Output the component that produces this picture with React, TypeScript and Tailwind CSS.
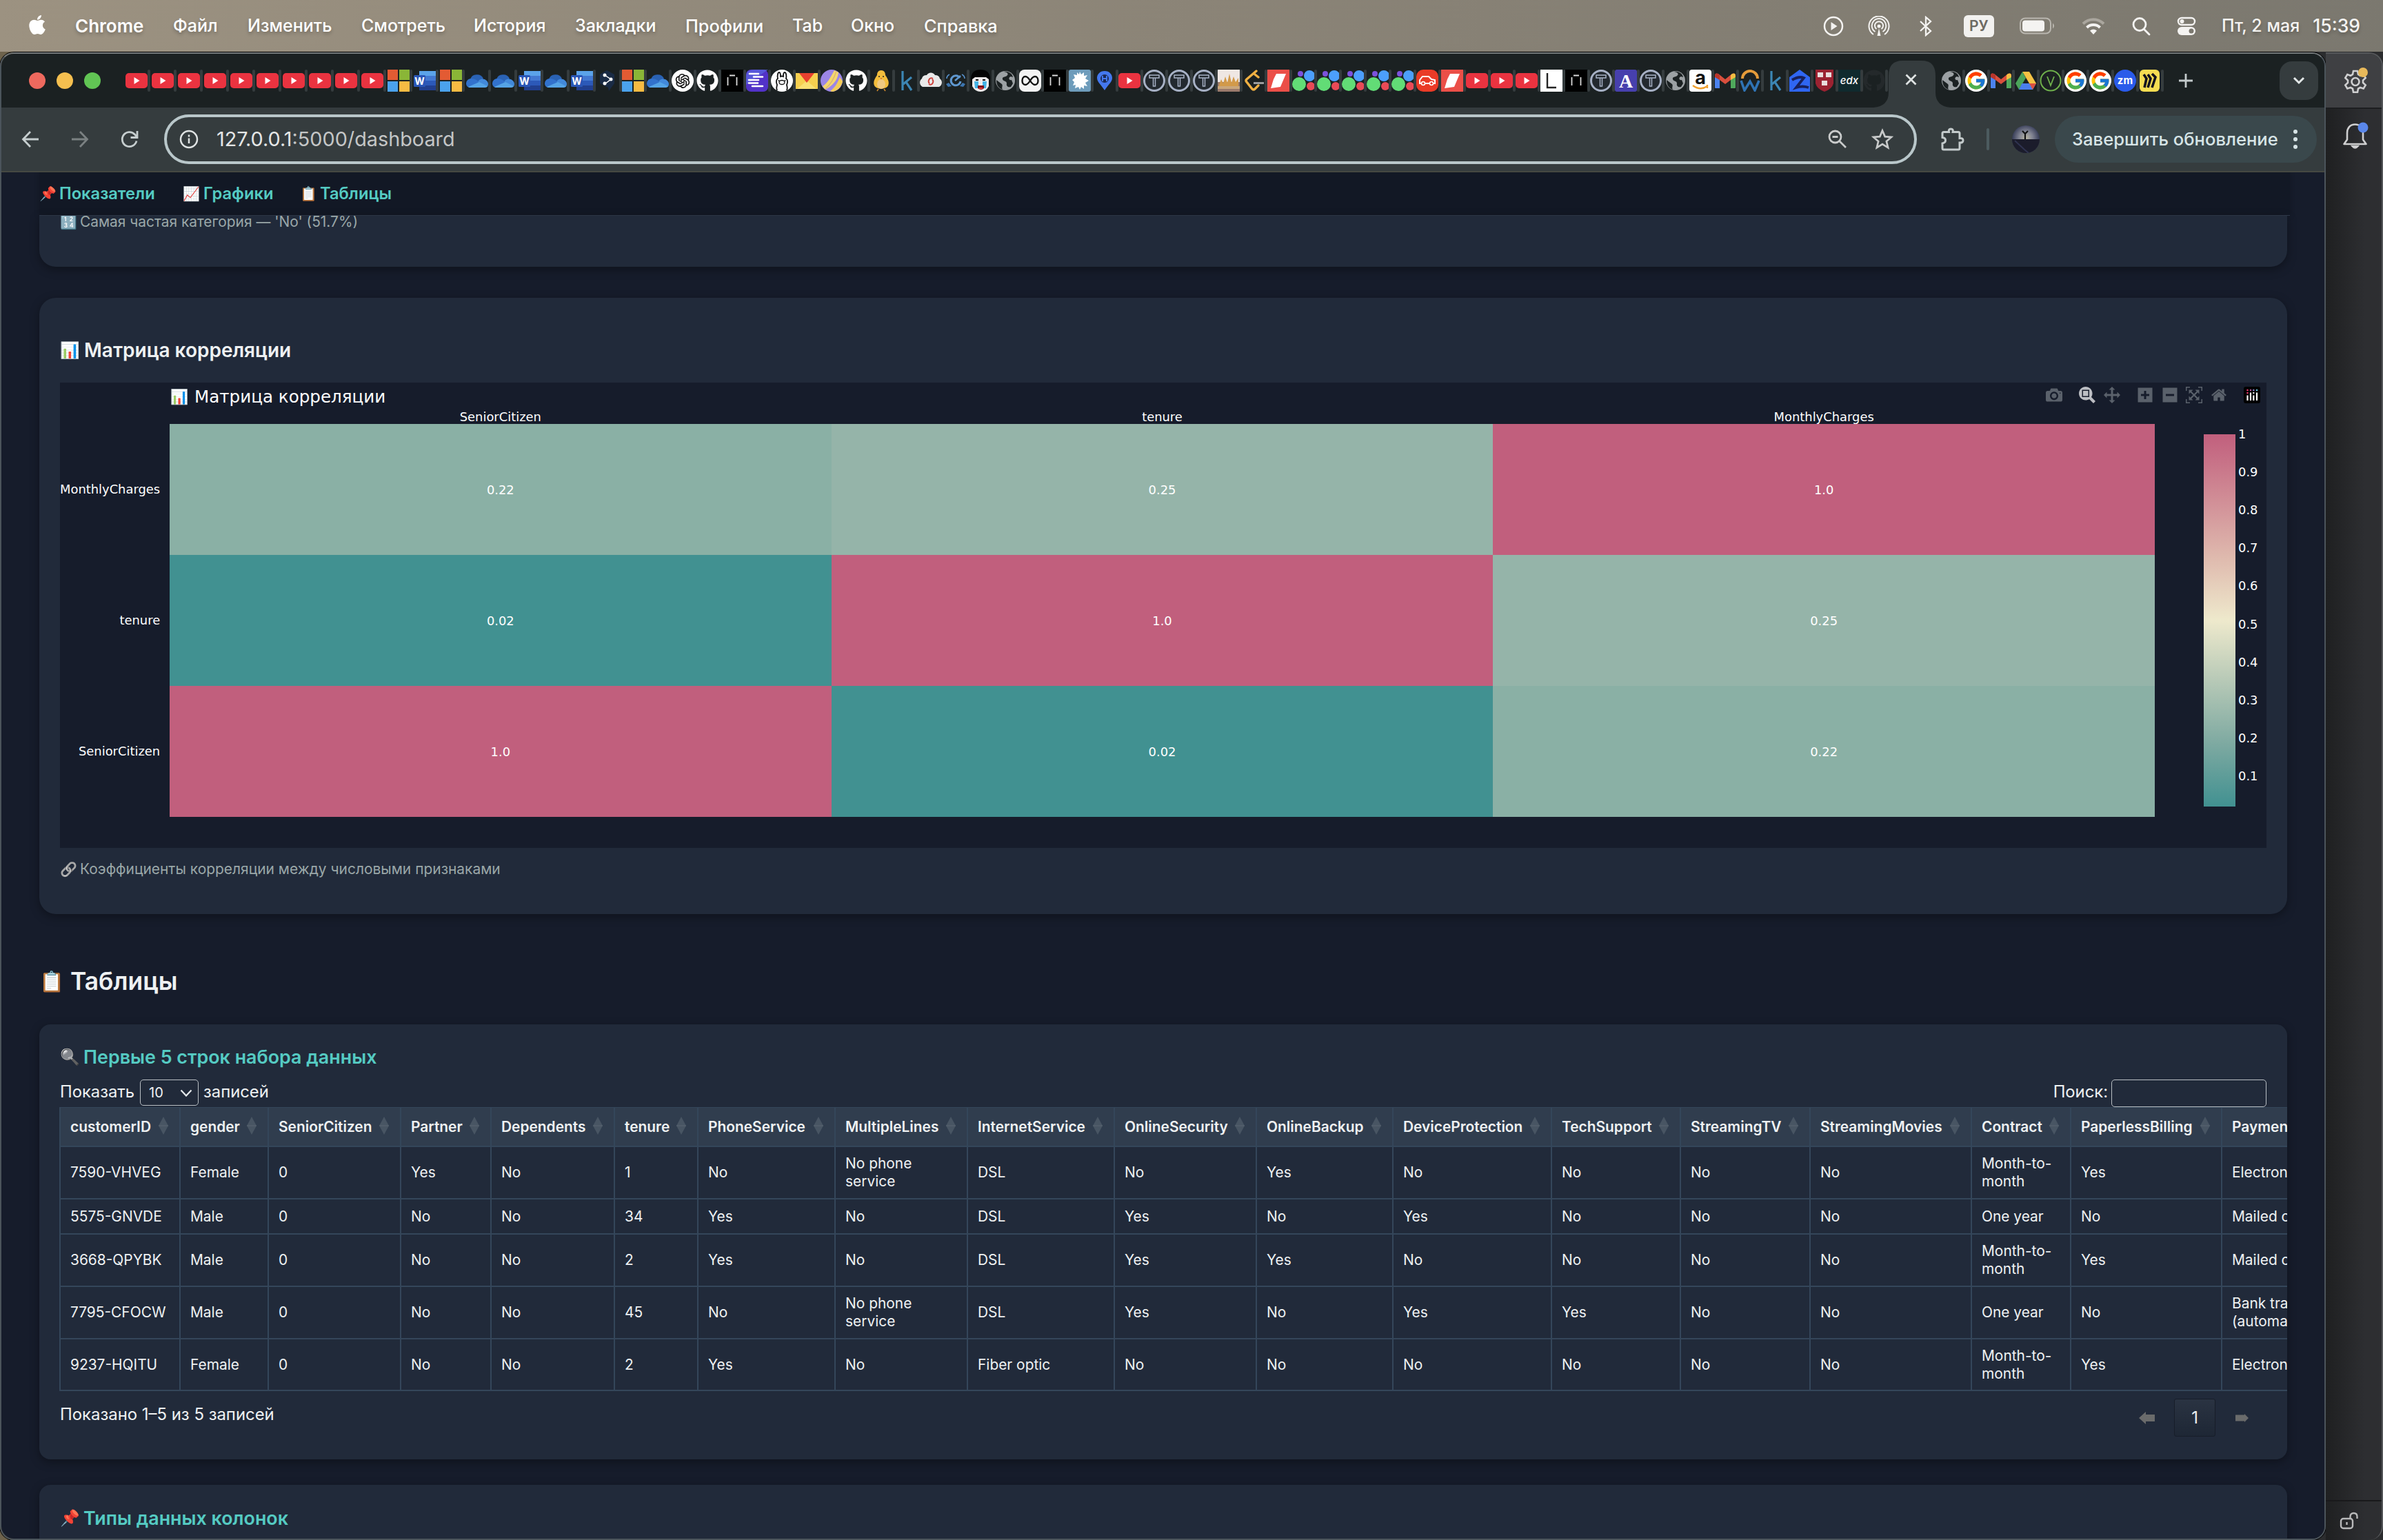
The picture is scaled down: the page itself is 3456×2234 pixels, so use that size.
import React from "react";
import { FaApple, FaGithub } from "react-icons/fa";
import { FcGoogle } from "react-icons/fc";
import { AiOutlineOpenAI } from "react-icons/ai";

/* ---------- favicons (all drawn in a 32×32 box) ---------- */

const YouTube = () => (
  <>
    <rect x="0" y="5" width="32" height="22" rx="5" fill="#ea3340" />
    <path d="M12.500 11v10l8-5z" fill="#fff" />
  </>
);
const Microsoft = () => (
  <>
    <path fill="#e35b33" d="M0 0h15v15H0z" />
    <path fill="#8ab637" d="M17 0h15v15H17z" />
    <path fill="#4ba2ec" d="M0 17h15v15H0z" />
    <path fill="#f7bb43" d="M17 17h15v15H17z" />
  </>
);
const Word = () => (
  <>
    <path fill="#5ba3ea" d="M8 2h24v7H8z" />
    <path fill="#4379d2" d="M8 9h24v7H8z" />
    <path fill="#2c59b8" d="M8 16h24v7H8z" />
    <path fill="#213f8f" d="M8 23h24v7H8z" />
    <rect x="0" y="8" width="17" height="17" rx="1.500" fill="#2a56b6" />
    <text x="8.500" y="21.500" textAnchor="middle" fontSize="14" fontWeight="700" fontFamily="Inter, sans-serif" fill="#fff">W</text>
  </>
);
const OneDrive = () => (
  <>
    <path fill="#2a62b4" d="M6 14a10 9 0 0 1 19-1l-8 8z" />
    <path fill="#3272cd" d="M0 20a7 7 0 0 1 8-7c5 0 9 3 13 7L6 26c-4 0-6-3-6-6z" />
    <path fill="#4289da" d="M19 15c5-4 13 0 13 6 0 2-1 4-2 4l-13-7z" />
    <path fill="#55a4e6" d="M3 25l16-7 12 6c-1 2-3 2-5 2H7c-2 0-3 0-4-1z" />
  </>
);
const Hex = () => (
  <>
    <path fill="#1a2b45" d="M14 1l11 6v13l-8 11-1-5-12-6V7z" />
    <path d="M11 8l9 6-9 7" stroke="#fff" strokeWidth="1.500" fill="none" />
    <circle cx="11" cy="8" r="2.500" fill="#fff" />
    <circle cx="20" cy="14" r="2.500" fill="#fff" />
    <circle cx="11" cy="20" r="2.500" fill="#fff" />
  </>
);
const OpenAI = () => (
  <>
    <circle cx="16" cy="16" r="16" fill="#fff" />
    <AiOutlineOpenAI x="2.500" y="2.500" size={27} color="#111" />
  </>
);
const GitHub = () => <FaGithub size={32} color="#fff" />;
const GitHubDark = () => <FaGithub size={32} color="#24292b" />;
const Notch = () => (
  <>
    <rect width="32" height="32" fill="#000" />
    <path d="M9.500 23V11M22.500 23V11M12 8.500h8" stroke="#d9d9d9" strokeWidth="1.800" fill="none" />
  </>
);
const Purple = () => (
  <>
    <rect width="32" height="32" rx="7" fill="#5232c8" />
    <path d="M0 10Q0 0 12 0h20L0 22z" fill="#5a66e0" opacity=".7" />
    <path d="M5 6h13M11 10.500h13M4 15h14M4 19.500h13M9 24h15" stroke="#fff" strokeWidth="2.600" strokeLinecap="round" />
  </>
);
const Llama = () => (
  <>
    <circle cx="16" cy="16" r="16" fill="#fff" />
    <path d="M9 30c-2-4 0-6 0-8-2-4-1-8 1-9-1-4 0-9 2-9s2 4 2 6q2-1 4 0c0-2 0-6 2-6s3 5 2 9c2 1 3 5 1 9 0 2 2 4 0 8" fill="none" stroke="#111" strokeWidth="1.800" />
    <ellipse cx="16" cy="18.500" rx="4" ry="3" fill="none" stroke="#111" strokeWidth="1.300" />
    <circle cx="11.500" cy="16" r="1" fill="#111" />
    <circle cx="20.500" cy="16" r="1" fill="#111" />
  </>
);
const YaMail = () => (
  <>
    <rect y="5" width="32" height="23" fill="#f6d04f" />
    <path d="M2 28l14-12 14 12z" fill="#f9e173" />
    <path d="M5 5h22L16 19z" fill="#e8402f" />
  </>
);
const Swirl = () => (
  <>
    <circle cx="16" cy="16" r="16" fill="#9c86e6" />
    <path d="M3 24C10 20 14 12 20 1l6 3c-1 10-6 16-14 22l-5 3z" fill="#f6d76c" />
    <path d="M14 31c6-4 10-10 14-20l4 6c-2 9-8 14-15 15z" fill="#f3cd57" />
    <path d="M7 28C14 22 20 12 23 2" stroke="#d9b07a" strokeWidth="1.200" fill="none" />
  </>
);
const Chick = () => (
  <>
    <path d="M16 1c5 0 6 4 6 7 4 6 6 10 4 15-2 6-18 6-20 0-2-5 0-9 4-15 0-3 1-7 6-7z" fill="#f3bd3c" />
    <ellipse cx="16" cy="21" rx="6" ry="7" fill="#efc982" />
    <circle cx="13" cy="10" r="1" fill="#222" />
    <circle cx="19" cy="10" r="1" fill="#222" />
    <path d="M14.500 12h3L16 14.500z" fill="#d5722c" />
    <path d="M12 28l-2 3M20 28l2 3" stroke="#d28a2c" strokeWidth="1.500" />
  </>
);
const Kaggle = () => <path d="M11 2v28M24 11L12 21M16 18l8 12" stroke="#3c86b4" strokeWidth="3.200" fill="none" />;
const CloudC = () => (
  <>
    <path d="M4 25a7 7 0 0 1-1-12 7 6 0 0 1 7-5 7 7 0 0 1 12 0 7 6 0 0 1 7 5 7 7 0 0 1-1 12z" fill="#e9e9e9" />
    <path d="M19 13c-5-3-8 4-5 7M13 21c5 3 8-4 5-7" stroke="#cd403b" strokeWidth="2" fill="none" />
  </>
);
const Rotor = () => (
  <>
    <path d="M22 12a7 7 0 1 0 1 5" fill="none" stroke="#5f98d0" strokeWidth="3" />
    <path d="M15 16l8-7" stroke="#5f98d0" strokeWidth="2.400" />
    <path d="M3 13c0-3 2-5 4-6M29 13c0-3-2-5-4-6" stroke="#5790ca" strokeWidth="1.600" fill="none" />
    <path d="M2 21l4-2 4 5-5 1zM30 21l-4-2-4 5 5 1z" fill="#3c75b0" />
  </>
);
const Crying = () => (
  <>
    <path d="M2 14C2 4 8 0 16 0s14 4 14 14v9H2z" fill="#050505" />
    <path d="M4 14l4-3h16l4 3v10q-4 8-12 8T4 24z" fill="#f0ecec" />
    <path d="M7 17h6v10H8zM19 17h6l-1 10h-5z" fill="#43b3e6" />
    <path d="M9 15h4M19 15h4" stroke="#111" strokeWidth="1.800" />
    <path d="M12 23h9v4q-4 4-9 0z" fill="#7c1119" />
    <path d="M14 26h5v2h-5z" fill="#e5383b" />
  </>
);
const Globe = () => (
  <>
    <circle cx="16" cy="16" r="14" fill="#9ca1a4" />
    <path d="M14 3c6 1 7 4 4 6-2 2-7 1-6 5 1 3 6 2 6 6-1 4 2 6 6 5l3-5-2-5c-4 1-5-4-1-5l3 1C26 6 21 2 14 3zM3 15l8 6c2 3-1 4 1 8-6-2-9-7-9-14z" fill="#1b2122" />
  </>
);
const InfinitySign = () => (
  <>
    <rect width="32" height="32" rx="8" fill="#f3f3f3" />
    <path d="M16 16c-3-5-5-6-7-6-3 0-4.500 3-4.500 6s1.500 6 4.500 6c2 0 4-1 7-6s5-6 7-6c3 0 4.500 3 4.500 6s-1.500 6-4.500 6c-2 0-4-1-7-6z" fill="none" stroke="#111" strokeWidth="2.400" />
  </>
);
const Splat = () => (
  <>
    <rect width="32" height="32" rx="3" fill="#6e9cbb" />
    <path d="M16 3l2 4 4-3v5l5-1-3 5 5 3-5 3 3 5-5-1v5l-4-3-2 4-2-4-5 2 1-5-4 1 2-5-3-3 4-3-2-5 5 1V4l3 3z" fill="#fff" />
  </>
);
const Pin = () => (
  <>
    <path d="M16 2c7 0 11 5 11 10 0 6-6 10-11 18C11 22 5 18 5 12 5 7 9 2 16 2z" fill="#4478ee" />
    <circle cx="16" cy="13" r="6" fill="#1b2a55" />
    <path d="M13 9v8M19 9v8M13 13h6" stroke="#4478ee" strokeWidth="2" />
  </>
);
const Theta = () => (
  <>
    <circle cx="16" cy="16" r="14.500" fill="#23292f" stroke="#a7b1c5" strokeWidth="3" />
    <path d="M9 8h14v4H9zM14.500 12h3v12h-3z" fill="none" stroke="#a7b1c5" strokeWidth="1.500" />
  </>
);
const Wheat = () => (
  <>
    <rect width="32" height="32" fill="#efe7e3" />
    <rect y="18" width="32" height="14" fill="#9a7a6c" />
    <path d="M2 22l3-8 3 6 3-10 3 9 3-13 3 13 3-9 3 8 4-6v12H2z" fill="#d29a4a" />
    <rect y="24" width="32" height="4" fill="#c9a67c" />
  </>
);
const Leet = () => (
  <>
    <path d="M20 2L6 14q-2 2 0 4l8 10q2 2 4 0l5-5M23 11l-5-4" stroke="#efb043" strokeWidth="3.400" fill="none" strokeLinecap="round" />
    <path d="M16 19.500h15" stroke="#9a9c9d" strokeWidth="3.200" />
  </>
);
const RedSlash = () => (
  <>
    <rect width="32" height="32" fill="#eb4f48" />
    <path d="M13 6h14l-8 19-14 2 4-13z" fill="#fff" />
  </>
);
const Dots = () => (
  <>
    <circle cx="12" cy="6" r="4" fill="#7c51dc" />
    <circle cx="25" cy="9" r="8" fill="#4c9ffc" />
    <circle cx="10" cy="21" r="10" fill="#62dc76" />
    <circle cx="27" cy="24" r="6" fill="#e94a57" />
  </>
);
const Car = () => (
  <>
    <rect width="32" height="32" rx="10" fill="#ea3b27" />
    <path d="M5 20v-5l4-5h9l4 4 5 1v5z" fill="none" stroke="#fff" strokeWidth="2" />
    <circle cx="10" cy="20" r="2.500" fill="#ea3b27" stroke="#fff" strokeWidth="1.600" />
    <circle cx="22" cy="20" r="2.500" fill="#ea3b27" stroke="#fff" strokeWidth="1.600" />
  </>
);
const LetterL = () => (
  <>
    <rect width="32" height="32" fill="#fff" />
    <path d="M10 5v21h13" stroke="#222" strokeWidth="2.400" fill="none" />
  </>
);
const LetterA = () => (
  <>
    <rect width="32" height="32" rx="3" fill="#4740ad" />
    <text x="16" y="26" textAnchor="middle" fontSize="28" fontWeight="700" fontFamily="Liberation Serif, serif" fill="#fff">A</text>
  </>
);
const Amazon = () => (
  <>
    <rect width="32" height="32" rx="4" fill="#fff" />
    <text x="16" y="21" textAnchor="middle" fontSize="27" fontWeight="700" fontFamily="Inter, sans-serif" fill="#111">a</text>
    <path d="M5 23q11 8 21 1M26 22v5" stroke="#f0a02f" strokeWidth="2.400" fill="none" />
  </>
);
const Gmail = () => (
  <>
    <path fill="#4c83ee" d="M1 9v17q0 1 1 1h6V13z" />
    <path fill="#4fa85c" d="M31 9v17q0 1-1 1h-6V13z" />
    <path fill="#d94f3d" d="M1 9q0-5 5-3l10 8 10-8q5-2 5 3l-7 6-8 6-8-6z" />
    <path fill="#f3bd42" d="M24 15V8l2-2q5-2 5 3v2z" />
    <path fill="#b8352b" d="M8 15V8L6 6Q1 4 1 9v2z" />
  </>
);
const Arch = () => (
  <>
    <path d="M5 13a11 11 0 0 1 22 0" stroke="#e59b3a" strokeWidth="4" fill="none" />
    <path d="M3 16l5 14 8-13 7 13 6-14" stroke="#2f73b4" strokeWidth="3.600" fill="none" />
  </>
);
const Zillow = () => (
  <>
    <path d="M16 0l15 11v21H1V11z" fill="#2f66f2" />
    <path d="M5 15q10-6 17-3L11 26q9-3 18 0" stroke="#17205c" strokeWidth="3.800" fill="none" />
  </>
);
const Shield = () => (
  <>
    <path d="M3 0h26v20q-2 8-13 12Q5 28 3 20z" fill="#9b2231" />
    <path d="M6 4h8v7H6zM18 4h8v7h-8zM12 16h8v7h-8z" fill="#e9dcdc" />
  </>
);
const Edx = () => (
  <>
    <rect width="32" height="32" fill="#102a2e" />
    <text x="16" y="21" textAnchor="middle" fontSize="15" fontStyle="italic" fontWeight="500" fontFamily="Inter, sans-serif" fill="#fff">edx</text>
  </>
);
const Google = () => (
  <>
    <circle cx="16" cy="16" r="16" fill="#fff" />
    <FcGoogle x="1" y="1" size={30} />
  </>
);
const Drive = () => (
  <>
    <path d="M11 3h10l10 17H21z" fill="#f5c244" />
    <path d="M11 3l5 9L6 29 1 20z" fill="#4ba35a" />
    <path d="M10.500 20H31l-5 9H6z" fill="#4a7fee" />
    <path d="M21 20h10l-5 9z" fill="#dc5140" />
  </>
);
const Vee = () => (
  <>
    <circle cx="16" cy="16" r="14.500" fill="none" stroke="#6fb04c" strokeWidth="2" />
    <path d="M11 10l5 13 5-13" stroke="#6fb04c" strokeWidth="1.800" fill="none" />
  </>
);
const Zoom = () => (
  <>
    <circle cx="16" cy="16" r="16" fill="#2a5bea" />
    <text x="16" y="20.500" textAnchor="middle" fontSize="15" fontWeight="700" fontFamily="Inter, sans-serif" fill="#fff">zm</text>
  </>
);
const Miro = () => (
  <>
    <rect x="1" width="29" height="32" rx="6" fill="#f7dd52" />
    <path d="M7 7l4 6-3 13M13 7l4 6-4 13M19 6l5 5-5 15" stroke="#14141e" strokeWidth="3.600" fill="none" />
  </>
);

const wideTabs = [
  YouTube, YouTube, YouTube, YouTube, YouTube, YouTube, YouTube, YouTube, YouTube, YouTube,
  Microsoft, Word, Microsoft, OneDrive, OneDrive, Word, OneDrive, Word,
];
const narrowTabs = [
  Hex, Microsoft, OneDrive, OpenAI, GitHub, Notch, Purple, Llama, YaMail, Swirl, GitHub, Chick, Kaggle, CloudC, Rotor,
  Crying, Globe, InfinitySign, Notch, Splat, Pin, YouTube, Theta, Theta, Theta, Wheat, Leet, RedSlash, Dots, Dots, Dots,
  Dots, Dots, Car, RedSlash, YouTube, YouTube, YouTube, LetterL, Notch, Theta, LetterA, Theta, Globe, Amazon, Gmail,
  Arch, Kaggle, Zillow, Shield, Edx, GitHubDark,
];
const rightTabs = [Globe, Google, Gmail, Drive, Vee, Google, Google, Zoom, Miro];

function Tab({ icon: Icon, wide }: { icon: React.FC; wide?: boolean }) {
  return (
    <div className={wide ? "flex w-[38px] shrink-0" : "flex w-9 shrink-0"}>
      <svg width="32" height="32" viewBox="0 0 32 32" className="shrink-0">
        <Icon />
      </svg>
      <span className="h-8 w-1 rounded-sm bg-[#353c3e]" />
    </div>
  );
}

/* ---------- macOS menu bar ---------- */

function MenuBar() {
  return (
    <header className="flex h-[75px] shrink-0 items-center bg-linear-to-r from-[#9c9281] via-[#8b8477] to-[#7b786f] pl-[38px] text-[25px] font-medium text-white [text-shadow:0_3px_5px_rgba(0,0,0,.25)]">
      <FaApple className="-mt-1 mr-[39px] size-8" />
      <span className="w-[142px] text-[26px] font-semibold">Chrome</span>
      <span className="w-[108px]">Файл</span>
      <span className="w-[165px]">Изменить</span>
      <span className="w-[163px]">Смотреть</span>
      <span className="w-[147px]">История</span>
      <span className="w-[160px]">Закладки</span>
      <span className="w-[155px] text-[25.300px]">Профили</span>
      <span className="w-[85px]">Tab</span>
      <span className="w-[106px]">Окно</span>
      <span className="text-[25.300px]">Справка</span>
      <div className="ml-auto flex items-center text-[#f4f3f1]">
        <svg width="30" height="30" viewBox="0 0 30 30" fill="none" stroke="currentColor" strokeWidth="2.500" className="mr-[35px]">
          <circle cx="15" cy="15" r="13" />
          <path d="M11.500 9v12l9-6z" fill="currentColor" stroke="none" />
        </svg>
        <svg width="32" height="30" viewBox="0 0 32 30" fill="none" stroke="currentColor" strokeWidth="2" className="mr-[40px]">
          <path d="M8 27a14.500 14.500 0 1 1 16 0M10.500 23a10.300 10.300 0 1 1 11 0M12.500 19a6 6 0 1 1 7 0" />
          <circle cx="16" cy="15" r="2.500" fill="currentColor" stroke="none" />
          <path d="M16 18l-2.500 11h5z" fill="currentColor" stroke="none" />
        </svg>
        <svg width="24" height="30" viewBox="0 0 24 30" fill="none" stroke="currentColor" strokeWidth="2.300" className="mr-[43px]">
          <path d="M4 8l15 14-7 6V2l7 6L4 22" />
        </svg>
        <span className="mr-[37px] flex h-8 w-11 items-center justify-center rounded-[6px] bg-[#f2f1ef] text-[21px] font-semibold text-[#6d6a63] [text-shadow:none]">РУ</span>
        <svg width="53" height="26" viewBox="0 0 53 26" className="mr-[37px]">
          <rect x="1" y="1.500" width="44" height="22" rx="7" fill="none" stroke="#b9b6af" strokeWidth="2" />
          <rect x="4" y="4.500" width="32" height="16" rx="4" fill="#f4f3f1" />
          <path d="M48 8.500q4 4 0 8z" fill="#b9b6af" />
        </svg>
        <svg width="34" height="26" viewBox="0 0 34 26" fill="none" strokeWidth="4" className="mr-[38px]">
          <path d="M2 9.500a21 21 0 0 1 30 0" stroke="#aaa69e" />
          <path d="M7.500 15a13.500 13.500 0 0 1 19 0" stroke="#f4f3f1" />
          <path d="M12 19.500q5-4 10 0L17 25z" fill="#f4f3f1" />
        </svg>
        <svg width="28" height="28" viewBox="0 0 28 28" fill="none" stroke="currentColor" strokeWidth="2.800" className="mr-[38px]">
          <circle cx="12" cy="11.500" r="9" />
          <path d="M18.500 18.500l7.500 7.500" strokeLinecap="round" />
        </svg>
        <svg width="28" height="28" viewBox="0 0 28 28" className="mr-[37px]">
          <rect x="2" y="2" width="24" height="10" rx="5" fill="none" stroke="#f4f3f1" strokeWidth="2.400" />
          <circle cx="7.500" cy="7" r="3" fill="#f4f3f1" />
          <rect x="1" y="15" width="26" height="12" rx="6" fill="#f4f3f1" />
          <circle cx="21" cy="21" r="3.500" fill="#7b786f" />
        </svg>
        <span className="mr-[19px]">Пт, 2 мая</span>
        <span className="mr-[33px] text-[26.500px]">15:39</span>
      </div>
    </header>
  );
}

/* ---------- browser chrome ---------- */

function TabStrip() {
  return (
    <div className="flex h-[78px] shrink-0 items-center bg-[#1b2122]">
      <div className="ml-10 flex gap-4">
        <span className="size-6 rounded-full bg-[#ee695e]" />
        <span className="size-6 rounded-full bg-[#f5bf4f]" />
        <span className="size-6 rounded-full bg-[#61c554]" />
      </div>
      <div className="ml-[36px] flex">
        {wideTabs.map((t, i) => (
          <Tab key={i} icon={t} wide />
        ))}
        {narrowTabs.map((t, i) => (
          <Tab key={i} icon={t} />
        ))}
      </div>
      <div className="relative flex h-full w-[68px] shrink-0 items-end">
        <svg width="114" height="68" viewBox="0 0 114 68" className="absolute -left-[21px] bottom-0">
          <path d="M0 68q22-2 22-22V22Q22 0 42 0h28q20 0 20 22v24q0 20 22 22z" fill="#353c3e" />
          <path d="M47.500 20.500l14 14M61.500 20.500l-14 14" stroke="#dfe3e3" strokeWidth="2.800" />
        </svg>
      </div>
      <div className="ml-2 flex">
        {rightTabs.map((t, i) => (
          <Tab key={i} icon={t} />
        ))}
      </div>
      <svg width="22" height="22" viewBox="0 0 22 22" className="ml-[21px] shrink-0">
        <path d="M11 1v20M1 11h20" stroke="#c3cacb" strokeWidth="2.800" />
      </svg>
      <div className="ml-auto mr-[9px] flex size-14 shrink-0 items-center justify-center rounded-[18px] bg-[#353c3e]">
        <svg width="18" height="12" viewBox="0 0 18 12" fill="none" stroke="#e3e8e8" strokeWidth="3">
          <path d="M2 2l7 7 7-7" />
        </svg>
      </div>
    </div>
  );
}

function Toolbar() {
  return (
    <div className="flex h-[94px] shrink-0 items-center border-b-2 border-[#454842] bg-[#353c3e]">
      <svg width="26" height="26" viewBox="0 0 26 26" fill="none" stroke="#c6cecf" strokeWidth="2.800" className="ml-[29px]">
        <path d="M25 13H3M13 2L2.500 13 13 24" />
      </svg>
      <svg width="26" height="26" viewBox="0 0 26 26" fill="none" stroke="#7b8182" strokeWidth="2.800" className="ml-[46px]">
        <path d="M1 13h22M13 2l10.500 11L13 24" />
      </svg>
      <svg width="28" height="28" viewBox="0 0 28 28" fill="none" stroke="#c6cecf" strokeWidth="2.800" className="ml-[45px]">
        <path d="M24 16.500A10.500 10.500 0 1 1 21.500 7l3 3.500" />
        <path d="M25 2v9.500h-9.500" />
      </svg>
      <div className="ml-[36px] flex h-18 w-[2542px] items-center rounded-full border-4 border-[#b9c7ca]">
        <svg width="28" height="28" viewBox="0 0 28 28" fill="none" stroke="#dfe3e3" strokeWidth="2.500" className="ml-[18px]">
          <circle cx="14" cy="14" r="12" />
          <path d="M14 12.500v7.500M14 7.500v3" />
        </svg>
        <span className="ml-[26px] text-[28.800px] text-[#c4c6c6]">
          <span className="text-[#e4e6e6]">127.0.0.1</span>:5000/dashboard
        </span>
        <svg width="30" height="30" viewBox="0 0 30 30" fill="none" stroke="#c9cbcb" strokeWidth="2.800" className="ml-auto mr-[34px]">
          <circle cx="11.500" cy="11.500" r="8.500" />
          <path d="M18 18l9 9M7.500 11.500h8" />
        </svg>
        <svg width="32" height="32" viewBox="0 0 32 32" fill="none" stroke="#c9cbcb" strokeWidth="2.700" className="mr-[30px]">
          <path d="M16 3.500l3.700 8.600 9.300.8-7.100 6.100 2.200 9.100L16 23.200l-8.100 4.900 2.200-9.100L3 12.900l9.300-.8z" />
        </svg>
      </div>
      <svg width="36" height="34" viewBox="0 0 36 34" fill="none" stroke="#c3cacb" strokeWidth="3" className="ml-[34px]">
        <path d="M3 8.500q0-2 2-2h7.500q-1-4.500 2.800-4.500t2.800 4.500H26q2 0 2 2v7q5-.5 5 3.200t-5 3.300V30q0 2-2 2H5q-2 0-2-2v-7q4.500-1 4.500-4.500T3 14.500z" />
      </svg>
      <span className="ml-[31px] h-8 w-1 rounded bg-[#4c5b5f]" />
      <svg width="40" height="40" viewBox="0 0 40 40" className="ml-[33px]">
        <defs>
          <radialGradient id="avatarSky" cx=".5" cy=".45" r=".5">
            <stop offset="0" stopColor="#b9b6a4" />
            <stop offset=".5" stopColor="#7e8191" />
            <stop offset="1" stopColor="#343a55" />
          </radialGradient>
        </defs>
        <circle cx="20" cy="20" r="20" fill="url(#avatarSky)" />
        <path d="M0 20h40a20 20 0 0 1-40 0z" fill="#1b1c2b" />
        <path d="M4 22l14 13L24 40" stroke="#2f3350" strokeWidth="2" fill="none" />
        <path d="M15 8l4 4v8M23 8l-4 4" stroke="#111" strokeWidth="2.200" fill="none" />
      </svg>
      <div className="ml-[22px] flex h-[68px] w-[380px] items-center rounded-full bg-[#3a484c] pl-[25px] text-[25.600px] font-medium text-[#d7e4e6]">
        Завершить обновление
        <span className="ml-[22px] flex flex-col gap-[5px]">
          <span className="size-[6px] rounded-full bg-current" />
          <span className="size-[6px] rounded-full bg-current" />
          <span className="size-[6px] rounded-full bg-current" />
        </span>
      </div>
    </div>
  );
}

/* ---------- dashboard ---------- */

function PageNav() {
  return (
    <nav className="ml-[55px] flex h-[63px] w-[3264px] shrink-0 items-center border-b border-[#313b4c] bg-[#121825] text-[23.700px] font-semibold text-[#55cbc3] shadow-[0_0_8px_rgba(0,0,0,.2)]">
      <a className="flex w-[208px] items-center whitespace-nowrap">
        <span className="w-[29px] text-[20px]">📌</span>Показатели
      </a>
      <a className="flex w-[170px] items-center whitespace-nowrap">
        <span className="w-[30px] text-[20px]">📈</span>Графики
      </a>
      <a className="flex items-center whitespace-nowrap">
        <span className="w-[29px] text-[20px]">📋</span>Таблицы
      </a>
    </nav>
  );
}

function ModeIcon({ d, w = 1000, className }: { d: string; w?: number; className: string }) {
  return (
    <svg height="24" width="24" viewBox={`0 0 ${w} 1000`} className={className}>
      <path d={d} transform="matrix(1 0 0 -1 0 850)" fill="currentColor" />
    </svg>
  );
}

function ModeBar() {
  return (
    <div className="ml-auto flex items-center text-[#5a616b]">
      <ModeIcon className="mr-6" d="m500 450c-83 0-150-67-150-150 0-83 67-150 150-150 83 0 150 67 150 150 0 83-67 150-150 150z m400 150h-120c-16 0-34 13-39 29l-31 93c-6 15-23 28-40 28h-340c-16 0-34-13-39-28l-31-94c-6-15-23-28-40-28h-120c-55 0-100-45-100-100v-450c0-55 45-100 100-100h800c55 0 100 45 100 100v450c0 55-45 100-100 100z m-400-550c-138 0-250 112-250 250 0 138 112 250 250 250 138 0 250-112 250-250 0-138-112-250-250-250z m365 380c-19 0-35 16-35 35 0 19 16 35 35 35 19 0 35-16 35-35 0-19-16-35-35-35z" />
      <ModeIcon className="mr-3 text-[#bcbec3]" d="m1000-25l-250 251c40 63 63 138 63 218 0 224-182 406-407 406-224 0-406-182-406-406s183-406 407-406c80 0 155 22 218 62l250-250 125 125z m-812 250l0 438 437 0 0-438-437 0z m62 375l313 0 0-312-313 0 0 312z" />
      <ModeIcon className="mr-6" d="m1000 350l-187 188 0-125-250 0 0 250 125 0-188 187-187-187 125 0 0-250-250 0 0 125-188-188 186-187 0 125 252 0 0-250-125 0 187-188 188 188-125 0 0 250 250 0 0-126 187 188z" />
      <ModeIcon className="mr-3" w={875} d="m1 787l0-875 875 0 0 875-875 0z m687-500l-187 0 0-187-125 0 0 187-188 0 0 125 188 0 0 187 125 0 0-187 187 0 0-125z" />
      <ModeIcon className="mr-[11px]" w={875} d="m0 788l0-876 875 0 0 876-875 0z m688-500l-500 0 0 125 500 0 0-125z" />
      <ModeIcon className="mr-3" d="m250 850l-187 0-63 0 0-62 0-188 63 0 0 188 187 0 0 62z m688 0l-188 0 0-62 188 0 0-188 62 0 0 188 0 62-62 0z m-875-938l0 188-63 0 0-188 0-62 63 0 187 0 0 62-187 0z m875 188l0-188-188 0 0-62 188 0 62 0 0 62 0 188-62 0z m-125 188l-1 0-93-94-156 156 156 156 92-93 2 0 0 250-250 0 0-2 93-92-156-156-156 156 94 92 0 2-250 0 0-250 0 0 93 93 157-156-157-156-93 94 0 0 0-250 250 0 0 0-94 93 156 157 156-157-93-93 0 0 250 0 0 250z" />
      <ModeIcon className="mr-6" w={928.6} d="m786 296v-267q0-15-11-26t-25-10h-214v214h-143v-214h-214q-15 0-25 10t-11 26v267q0 1 0 2t0 2l321 264 321-264q1-1 1-4z m124 39l-34-41q-5-5-12-6h-2q-7 0-12 3l-386 322-386-322q-7-4-13-4-7 2-12 7l-35 41q-4 5-3 13t6 12l401 334q18 15 42 15t43-15l136-114v109q0 8 5 13t13 5h107q8 0 13-5t5-13v-227l122-102q5-5 6-12t-4-13z" />
      <svg width="24" height="24" viewBox="0 0 24 24" className="mr-[9px]">
        <rect width="24" height="24" rx="3" fill="#000" />
        <circle cx="5.500" cy="5" r="1.300" fill="#e8356d" />
        <circle cx="5.500" cy="9" r="1.300" fill="#e8356d" />
        <circle cx="10" cy="5" r="1.300" fill="#b5589a" />
        <circle cx="14.300" cy="5" r="1.300" fill="#8d7fc9" />
        <circle cx="14.300" cy="9" r="1.300" fill="#e3e3e3" />
        <circle cx="19" cy="5" r="1.300" fill="#62c5dd" />
        <path d="M5.500 12.500V20M10 8.500V20M14.300 12.500V20M19 8.500V20" stroke="#fff" strokeWidth="2.200" />
      </svg>
    </div>
  );
}

const heat = [
  ["0.22", "0.25", "1.0"],
  ["0.02", "1.0", "0.25"],
  ["1.0", "0.02", "0.22"],
];
const heatColor: Record<string, string> = {
  "0.22": "bg-[#8ab0a5]",
  "0.25": "bg-[#95b4a9]",
  "0.02": "bg-[#419191]",
  "1.0": "bg-[#c15f7d]",
};

function CorrelationPlot() {
  return (
    <div className="mt-[27px] flex h-[675px] flex-col bg-[#161c2b] font-['DejaVu_Sans',Verdana,sans-serif] text-[17.900px] text-white">
      <div className="flex h-9 items-center">
        <div className="ml-[160px] mt-[7px] flex items-center whitespace-nowrap text-[24.600px]">
          <span className="w-[35px] text-[21px]">📊</span>Матрица корреляции
        </div>
        <ModeBar />
      </div>
      <div className="ml-[159px] grid h-6 w-[2879px] grid-cols-3 items-center pt-px text-center">
        <span>SeniorCitizen</span>
        <span>tenure</span>
        <span>MonthlyCharges</span>
      </div>
      <div className="flex h-[570px]">
        <div className="grid w-[159px] shrink-0 grid-rows-3 items-center pr-[14px] text-right">
          <span>MonthlyCharges</span>
          <span>tenure</span>
          <span>SeniorCitizen</span>
        </div>
        <div className="grid w-[2879px] shrink-0 grid-cols-3 grid-rows-3">
          {heat.flat().map((v, i) => (
            <div key={i} className={`flex items-center justify-center pt-0.5 ${heatColor[v]}`}>
              {v}
            </div>
          ))}
        </div>
        <div className="ml-[71px] mt-[15px] h-[540px] w-[46px] shrink-0 bg-[linear-gradient(to_top,#419191,#7da9a1_16.7%,#b5c8b6_33.3%,#eee9cc_50%,#dfbaae_66.7%,#d08b95_83.3%,#c15f7d)]" />
        <div className="-mt-[12px] ml-1">
          {["1", "0.9", "0.8", "0.7", "0.6", "0.5", "0.4", "0.3", "0.2", "0.1"].map((t) => (
            <div key={t} className="flex h-[55.100px] items-center">{t}</div>
          ))}
        </div>
      </div>
    </div>
  );
}

const columns: { name: string; col: string; values: string[] }[] = [
  { name: "customerID", col: "w-[174px]", values: ["7590-VHVEG", "5575-GNVDE", "3668-QPYBK", "7795-CFOCW", "9237-HQITU"] },
  { name: "gender", col: "w-[128px]", values: ["Female", "Male", "Male", "Male", "Female"] },
  { name: "SeniorCitizen", col: "w-[192px]", values: ["0", "0", "0", "0", "0"] },
  { name: "Partner", col: "w-[131px]", values: ["Yes", "No", "No", "No", "No"] },
  { name: "Dependents", col: "w-[179px]", values: ["No", "No", "No", "No", "No"] },
  { name: "tenure", col: "w-[121px]", values: ["1", "34", "2", "45", "2"] },
  { name: "PhoneService", col: "w-[199px]", values: ["No", "Yes", "Yes", "No", "Yes"] },
  { name: "MultipleLines", col: "w-[192px]", values: ["No phone service", "No", "No", "No phone service", "No"] },
  { name: "InternetService", col: "w-[213px]", values: ["DSL", "DSL", "DSL", "DSL", "Fiber optic"] },
  { name: "OnlineSecurity", col: "w-[206px]", values: ["No", "Yes", "Yes", "Yes", "No"] },
  { name: "OnlineBackup", col: "w-[198px]", values: ["Yes", "No", "Yes", "No", "No"] },
  { name: "DeviceProtection", col: "w-[230px]", values: ["No", "Yes", "No", "Yes", "No"] },
  { name: "TechSupport", col: "w-[187px]", values: ["No", "No", "No", "Yes", "No"] },
  { name: "StreamingTV", col: "w-[188px]", values: ["No", "No", "No", "No", "No"] },
  { name: "StreamingMovies", col: "w-[234px]", values: ["No", "No", "No", "No", "No"] },
  { name: "Contract", col: "w-[144px]", values: ["Month-to-month", "One year", "Month-to-month", "One year", "Month-to-month"] },
  { name: "PaperlessBilling", col: "w-[219px]", values: ["Yes", "No", "Yes", "No", "Yes"] },
  { name: "PaymentMethod", col: "w-[216px]", values: ["Electronic check", "Mailed check", "Mailed check", "Bank transfer (automatic)", "Electronic check"] },
];
const rowHeights = ["h-[76px]", "h-[51px]", "h-[76px]", "h-[76px]", "h-[75px]"];

function DataTable() {
  return (
    <table className="-ml-px w-[3351px] table-fixed border-separate border-spacing-0 text-left text-[20.900px] leading-[26px]">
      <colgroup>
        {columns.map((c) => (
          <col key={c.name} className={c.col} />
        ))}
      </colgroup>
      <thead>
        <tr>
          {columns.map((c) => (
            <th key={c.name} className="h-[58px] border-b-2 border-l-2 border-t border-[#34465a] bg-[#303d4e] p-0 font-semibold">
              <div className="flex items-center justify-between pl-[14px] pr-4">
                {c.name}
                <svg width="14" height="26" viewBox="0 0 14 26" className="-mt-1 shrink-0">
                  <path d="M7 0l7 13-7 13L0 13z" fill="#485563" />
                  <path d="M0 13h14" stroke="#5b6773" />
                </svg>
              </div>
            </th>
          ))}
        </tr>
      </thead>
      <tbody>
        {rowHeights.map((h, r) => (
          <tr key={r}>
            {columns.map((c) => (
              <td key={c.name} className={`${h} border-b-2 border-l-2 border-[#34465a] py-0 pl-[14px] pr-3 align-middle`}>
                {c.values[r]}
              </td>
            ))}
          </tr>
        ))}
      </tbody>
    </table>
  );
}

function Dashboard() {
  return (
    <div className="flex h-[1982px] flex-col overflow-hidden bg-[#161c2b] text-[#eef1f2]">
      <PageNav />
      <div className="ml-[55px] w-[3260px]">
        <section className="flex h-[74px] items-start overflow-hidden rounded-b-3xl bg-[#212a3a] pl-[30px] shadow-[0_4px_14px_rgba(0,0,0,.35)]">
          <p className="-mt-[7px] flex h-8 items-center text-[20.900px] text-[#9aa7a8]">
            <span className="w-[29px] text-[20px]">🔢</span>Самая частая категория — 'No' (51.7%)
          </p>
        </section>

        <section className="mt-[45px] h-[894px] rounded-3xl bg-[#212a3a] px-[30px] pt-[56px] shadow-[0_4px_14px_rgba(0,0,0,.35)]">
          <h3 className="flex h-10 items-center text-[28px] font-semibold">
            <span className="w-[35px] text-[23px]">📊</span>Матрица корреляции
          </h3>
          <CorrelationPlot />
          <p className="mt-4 flex h-[30px] items-center text-[20.950px] text-[#9aa7a8]">
            <span className="w-[29px] text-[20px] grayscale">🔗</span>Коэффициенты корреляции между числовыми признаками
          </p>
        </section>

        <h2 className="mt-[74px] flex h-12 items-center text-[35.400px] font-semibold">
          <span className="w-[45px] text-[29px]">📋</span>Таблицы
        </h2>

        <section className="mt-[38px] h-[631px] overflow-hidden rounded-2xl bg-[#212a3a] pl-[30px] pt-[27px] shadow-[0_4px_14px_rgba(0,0,0,.35)]">
          <h3 className="flex h-10 items-center text-[26.850px] font-semibold text-[#55cbc3]">
            <span className="w-[34px] text-[23px] grayscale">🔍</span>Первые 5 строк набора данных
          </h3>
          <div className="mt-[13px] flex h-10 items-start justify-between pr-[30px] text-[23.800px]">
            <div className="flex h-9 items-center">
              Показать
              <span className="ml-2 mr-[7px] mt-[2px] flex h-[38px] w-[85px] items-center justify-between rounded-[5px] border border-[#b9bfc4] pl-3 pr-2 text-[20px]">
                10
                <svg width="18" height="11" viewBox="0 0 18 11" fill="none" stroke="#e6eaec" strokeWidth="2.200">
                  <path d="M1.500 1.500L9 9.500l7.500-8" />
                </svg>
              </span>
              записей
            </div>
            <label className="flex h-10 items-center">
              <span className="-mt-1 mr-[5px]">Поиск:</span>
              <input className="h-10 w-[225px] rounded-[5px] border border-[#b9bfc4] bg-transparent" />
            </label>
          </div>
          <DataTable />
          <div className="mt-[11px] flex items-start pr-[30px] text-[23.900px]">
            <span className="mt-[7px] leading-8">Показано 1–5 из 5 записей</span>
            <div className="ml-auto flex h-[55px] items-center">
              <svg width="24" height="18" viewBox="0 0 24 18" className="mr-[27px]">
                <path d="M0 9l10-9v4h13v10H10v4z" fill="#6a6b6b" />
              </svg>
              <span className="flex h-[55px] w-[60px] items-center justify-center rounded-[3px] border border-[#171d29] bg-linear-to-b from-[#2a3342] to-[#1e2735]">1</span>
              <svg width="20" height="12" viewBox="0 0 20 12" className="ml-[29px] mr-[25px]">
                <path d="M19 6l-6-6v1.500H0v9h13V12z" fill="#6a6b6b" />
              </svg>
            </div>
          </div>
        </section>

        <section className="mt-[37px] h-[120px] rounded-2xl bg-[#212a3a] pl-[30px] pt-[28px] shadow-[0_4px_14px_rgba(0,0,0,.35)]">
          <h3 className="flex h-10 items-center text-[26.850px] font-semibold text-[#55cbc3]">
            <span className="w-[34px] text-[23px]">📌</span>Типы данных колонок
          </h3>
        </section>
      </div>
    </div>
  );
}

/* ---------- window behind the browser ---------- */

function SideWindow() {
  return (
    <aside className="flex flex-1 flex-col overflow-hidden rounded-r-[20px] border-r-2 border-t-2 border-[#55575a] bg-linear-to-r from-[#1f2021] to-[#2d2e31] to-70%">
      <div className="flex h-[80px] shrink-0 items-center border-b-2 border-[#1d1e20] bg-[#3f4043] pl-[25px]">
        <svg width="36" height="42" viewBox="0 0 36 42" fill="none" stroke="#cfcfd0" strokeWidth="2.600">
          <path d="M15 7h6l1 5 3 1.700 4.700-1.700 3 5-3.700 3.500v3.500l3.700 3.500-3 5L25 31l-3 1.700-1 5h-6l-1-5L11 31l-4.700 1.500-3-5L7 24v-3.500L3.300 17l3-5L11 13.700l3-1.700z" />
          <circle cx="18" cy="22.500" r="5.500" />
          <circle cx="29" cy="9" r="7" fill="#e8b95a" stroke="none" />
        </svg>
      </div>
      <svg width="38" height="42" viewBox="0 0 38 42" fill="none" stroke="#cfcfd0" strokeWidth="2.600" className="ml-[24px] mt-[18px] shrink-0">
        <path d="M2.500 33h32l-4.500-6.500V17c0-7-4-12.500-11.500-12.500S7 10 7 17v9.500z" strokeLinejoin="round" />
        <path d="M14.500 36q4 5 8 0z" fill="#cfcfd0" />
        <circle cx="30" cy="9" r="7.500" fill="#5a87ea" stroke="none" />
      </svg>
      <div className="mt-auto flex h-[58px] shrink-0 items-center border-t-2 border-[#19191b] pl-[20px]">
        <svg width="28" height="26" viewBox="0 0 28 26" fill="none" stroke="#b9b9ba" strokeWidth="2.400">
          <rect x="2" y="10" width="17" height="14" rx="3.500" />
          <path d="M15.500 10V7q0-5 5-5t5 5v3M10.500 15v4" />
        </svg>
      </div>
    </aside>
  );
}

export default function App() {
  return (
    <div className="flex h-[2234px] w-[3456px] flex-col overflow-hidden bg-[#8f8775] font-[Inter,sans-serif]">
      <MenuBar />
      <div className="flex flex-1 bg-[linear-gradient(90deg,#6e634c_50%,#2b2c2e_50%)] pt-px">
        <div className="flex w-[3373px] shrink-0 flex-col overflow-hidden rounded-[20px] border-2 border-[#4b545b] border-t-[#73787a] ring-1 ring-black">
          <TabStrip />
          <Toolbar />
          <Dashboard />
        </div>
        <SideWindow />
      </div>
    </div>
  );
}
